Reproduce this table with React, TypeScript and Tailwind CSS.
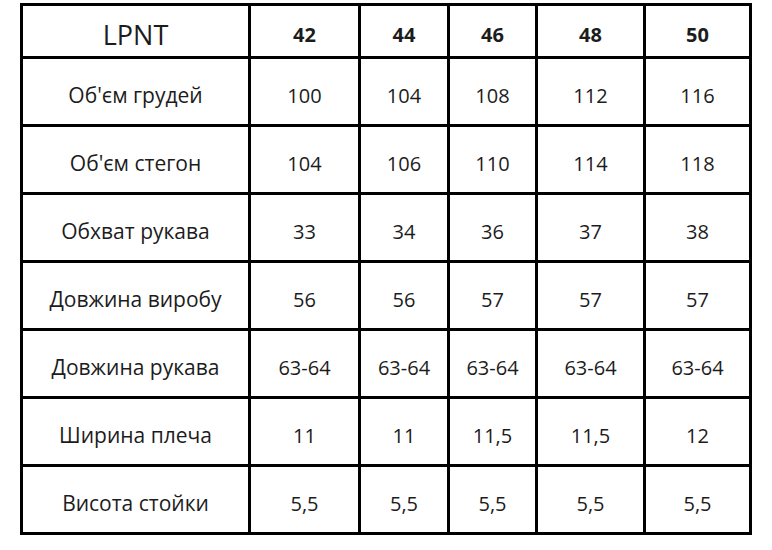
const sizes = ['42', '44', '46', '48', '50'];

const rows: [string, string[]][] = [
  ["Об'єм грудей", ['100', '104', '108', '112', '116']],
  ["Об'єм стегон", ['104', '106', '110', '114', '118']],
  ['Обхват рукава', ['33', '34', '36', '37', '38']],
  ['Довжина виробу', ['56', '56', '57', '57', '57']],
  ['Довжина рукава', ['63-64', '63-64', '63-64', '63-64', '63-64']],
  ['Ширина плеча', ['11', '11', '11,5', '11,5', '12']],
  ['Висота стойки', ['5,5', '5,5', '5,5', '5,5', '5,5']],
];

const cell = 'border-[3px] border-black text-center align-middle p-0';

export default function App() {
  return (
    <div className="min-h-[550px] w-[772px] bg-white pt-[3px] pl-[20px] font-['Open_Sans',sans-serif] text-[#1c1c1c]">
      <table className="table-fixed border-collapse w-[731px]">
        <colgroup>
          <col className="w-[228px]" />
          <col className="w-[110px]" />
          <col className="w-[89px]" />
          <col className="w-[88px]" />
          <col className="w-[108px]" />
          <col className="w-[106px]" />
        </colgroup>
        <thead>
          <tr className="h-[53px]">
            <th className={`${cell} text-[27px] font-normal pt-[8px]`}>LPNT</th>
            {sizes.map((s) => (
              <th key={s} className={`${cell} text-[20px] font-bold pt-[7px]`}>
                {s}
              </th>
            ))}
          </tr>
        </thead>
        <tbody>
          {rows.map(([label, values]) => (
            <tr key={label} className="h-[68px]">
              <td className={`${cell} text-[21px] pt-[9px]`}>{label}</td>
              {values.map((v, i) => (
                <td key={i} className={`${cell} text-[20px] pt-[9px]`}>
                  {v}
                </td>
              ))}
            </tr>
          ))}
        </tbody>
      </table>
    </div>
  );
}
